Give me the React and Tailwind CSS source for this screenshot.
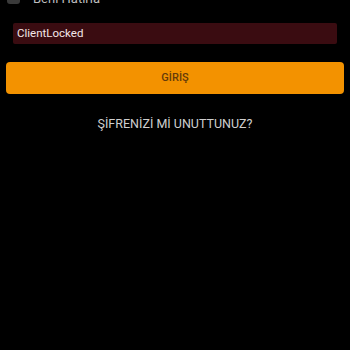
import React from 'react';

export default function App() {
  return (
    <div className="w-[350px] h-[350px] bg-black overflow-hidden" style={{ fontFamily: 'Roboto, "Noto Sans", sans-serif' }}>
      {/* Remember me row, scrolled mostly out of view */}
      <div className="flex items-center gap-[13px] pl-[7px] -mt-[11px] h-[15px]">
        <div className="w-[13px] h-[14px] rounded-[3px] bg-[#3a3a3a]" />
        <span className="text-[13px] leading-[13px] text-[#bdbdbd] mt-[4px]">Beni Hatırla</span>
      </div>

      {/* Error message */}
      <div className="mx-[13px] mt-[19px] h-[21px] bg-[#3a0c11] rounded-[2px] flex items-center px-[4px]">
        <span className="text-[11.5px] text-[#f3e6e8]">ClientLocked</span>
      </div>

      {/* Login button */}
      <button className="mx-[6px] mt-[18px] w-[338px] h-[32px] bg-[#f39200] rounded-[4px] flex items-center justify-center">
        <span className="text-[11px] font-medium text-[#643a0a]">GİRİŞ</span>
      </button>

      {/* Forgot password */}
      <div className="mt-[17px] text-center">
        <span className="text-[12.5px] text-[#cfcfcf]">ŞİFRENİZİ Mİ UNUTTUNUZ?</span>
      </div>
    </div>
  );
}
